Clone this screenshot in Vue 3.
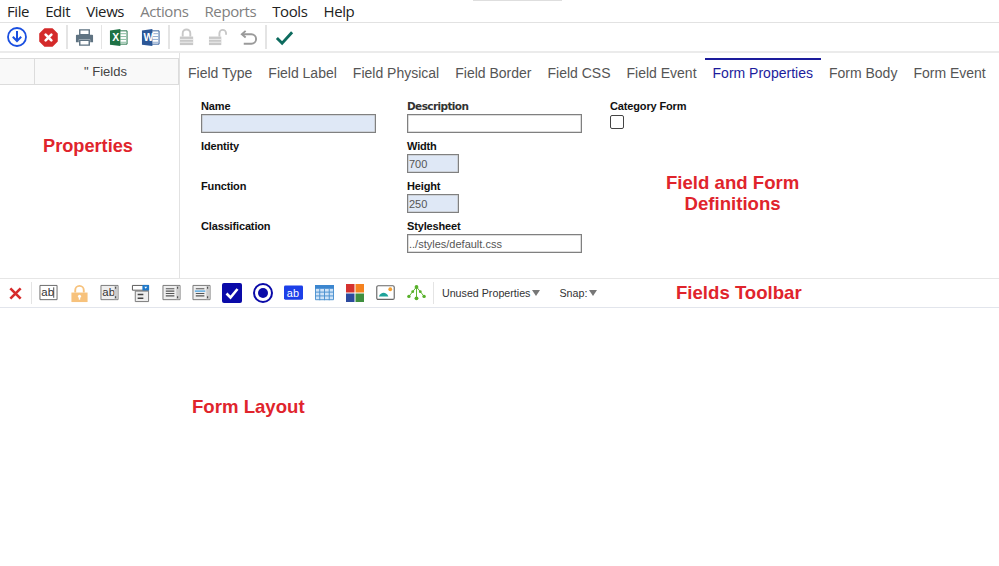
<script setup>
const menus = [
  { t: 'File' }, { t: 'Edit' }, { t: 'Views' }, { t: 'Actions', off: true },
  { t: 'Reports', off: true }, { t: 'Tools' }, { t: 'Help' }
]
const tabs = ['Field Type', 'Field Label', 'Field Physical', 'Field Border', 'Field CSS', 'Field Event', 'Form Properties', 'Form Body', 'Form Event']
</script>

<template>
  <div class="page">
    <i class="sliver"></i>
    <nav class="menu">
      <span v-for="m in menus" :key="m.t" :class="{ off: m.off }">{{ m.t }}</span>
    </nav>

    <div class="tools">
      <svg class="ic first" viewBox="0 0 20 20"><circle cx="10" cy="10" r="9" fill="none" stroke="#1a4fe0" stroke-width="1.800"/><path d="M10 4v10M5.800 9.800 10 14l4.200-4.200" fill="none" stroke="#1a4fe0" stroke-width="2"/></svg>
      <svg class="ic gap1" viewBox="0 0 20 20"><path d="M6 1h8l5 5v8l-5 5H6l-5-5V6z" fill="#d42a2a" stroke="#d42a2a" stroke-linejoin="round" stroke-width="1.500"/><path d="m7 7 6 6m0-6-6 6" stroke="#fff" stroke-width="2.800" stroke-linecap="round"/></svg>
      <i class="sep s1"></i>
      <svg class="ic" viewBox="0 0 20 20"><path d="M5 2h10v5H5z" fill="#fff" stroke="#5f7382" stroke-width="1.500"/><path d="M2 7h16a1 1 0 0 1 1 1v7h-3v-3H4v3H1V8a1 1 0 0 1 1-1z" fill="#5f7382"/><path d="M5 13h10v5H5z" fill="#fff" stroke="#5f7382" stroke-width="1.500"/></svg>
      <i class="sep s2"></i>
      <svg class="ic" viewBox="0 0 20 20"><path d="M11 3h8v14h-8z" fill="#fff" stroke="#1e7145"/><path d="M12 6h6M12 9h6M12 12h6M12 15h6" stroke="#7fb89a"/><path d="M1 2.500 12 1v18L1 17.500z" fill="#1e7145"/><text x="3.500" y="14" class="glyph">X</text></svg>
      <svg class="ic gap2" viewBox="0 0 20 20"><path d="M11 3h8v14h-8z" fill="#fff" stroke="#2b5797"/><path d="M12 6h6M12 9h6M12 12h6M12 15h6" stroke="#8aa6cf"/><path d="M1 2.500 12 1v18L1 17.500z" fill="#2b5797"/><text x="2.500" y="14" class="glyph">W</text></svg>
      <i class="sep s3"></i>
      <svg class="ic" viewBox="0 0 20 20"><path d="M6 9V5.500a4 4 0 0 1 8 0V9" fill="none" stroke="#c8c8c8" stroke-width="2"/><path d="M3 9h14v9H3z" fill="#c8c8c8"/><path d="M3 12h14M3 15h14" stroke="#eee"/></svg>
      <svg class="ic gap3" viewBox="0 0 20 20"><path d="M12 9V5.500a3.500 3.500 0 0 1 7 0V7" fill="none" stroke="#c8c8c8" stroke-width="2"/><path d="M1 9h13v9H1z" fill="#c8c8c8"/><path d="M1 12h13M1 15h13" stroke="#eee"/></svg>
      <svg class="ic gap3" viewBox="0 0 20 20"><path d="M7 3 3 6.500 7 10" fill="none" stroke="#9a9a9a" stroke-width="2"/><path d="M3.500 6.500H13a4.500 4.500 0 0 1 0 10H5" fill="none" stroke="#9a9a9a" stroke-width="2"/></svg>
      <i class="sep s4"></i>
      <svg class="ic" viewBox="0 0 20 20"><path d="M2 10.500 7.500 16 18 4.500" fill="none" stroke="#0d6b5e" stroke-width="3"/></svg>
    </div>

    <section class="main">
      <aside class="side">
        <div class="side-head">
          <div class="side-blank"></div>
          <div class="side-title">" Fields</div>
        </div>
      </aside>
      <div class="content">
        <div class="tabs">
          <span v-for="t in tabs" :key="t" class="tab" :class="{ on: t === 'Form Properties' }">{{ t }}</span>
        </div>
        <div class="form">
          <div class="col c1">
            <div class="fld"><label>Name</label><div class="inp blue wide"></div></div>
            <div class="fld"><label>Identity</label></div>
            <div class="fld"><label>Function</label></div>
            <div class="fld"><label>Classification</label></div>
          </div>
          <div class="col c2">
            <div class="fld"><label class="alt">Description</label><div class="inp wide"></div></div>
            <div class="fld"><label>Width</label><div class="inp blue short">700</div></div>
            <div class="fld"><label>Height</label><div class="inp blue short">250</div></div>
            <div class="fld"><label>Stylesheet</label><div class="inp wide">../styles/default.css</div></div>
          </div>
          <div class="col c3">
            <div class="fld"><label>Category Form</label><div class="check"></div></div>
          </div>
        </div>
      </div>
    </section>

    <div class="ftools">
      <svg class="x" viewBox="0 0 16 16"><path d="m2.500 2.500 11 11m0-11-11 11" stroke="#d62b2b" stroke-width="2.800"/></svg>
      <i class="sep f1"></i>
      <div class="slots">
        <svg class="fi" viewBox="0 0 20 18"><path d="M1 1.500h18v15H1z" fill="#fff" stroke="#666"/><text x="2.500" y="13" class="ab">ab</text><path d="M15.500 3.500v11" stroke="#444"/></svg>
        <svg class="fi" viewBox="0 0 20 20"><path d="M5.500 9V6.500a4.500 4.500 0 0 1 9 0V9" fill="none" stroke="#f7c27c" stroke-width="2"/><path d="M1.500 9h17v10h-17z" fill="#f7c27c"/><circle cx="10" cy="13" r="1.600" fill="#fff"/><path d="M10 13v3.500" stroke="#fff" stroke-width="1.500"/></svg>
        <svg class="fi" viewBox="0 0 20 18"><path d="M1 1.500h18v15H1z" fill="#eee" stroke="#777"/><text x="2.500" y="13" class="ab">ab</text><path d="M15 2h3.500v14H15z" fill="#ccc"/><path d="M16 4h1M16 14h1" stroke="#333" stroke-width="2"/></svg>
        <svg class="fi" viewBox="0 0 20 20"><path d="M1.500 1.500h17v5h-17z" fill="#fff" stroke="#555"/><path d="M12 1h7v6h-7z" fill="#1f78c8"/><path d="m14 3 1.500 2L17 3z" fill="#fff"/><path d="M4.500 7.500h14v11h-14z" fill="#eee" stroke="#777"/><path d="M7 11h6M7 15h6" stroke="#444" stroke-width="1.500"/></svg>
        <svg class="fi" viewBox="0 0 20 18"><path d="M1 1.500h18v15H1z" fill="#eee" stroke="#777"/><path d="M4 5h9M4 7.500h9M4 10h9M4 12.500h9" stroke="#555" stroke-width="1.200"/><path d="M15 2h3.500v14H15z" fill="#ccc"/><path d="M16 4h1M16 14h1" stroke="#333" stroke-width="2"/></svg>
        <svg class="fi" viewBox="0 0 20 18"><path d="M1 1.500h18v15H1z" fill="#eee" stroke="#777"/><path d="M4 5h9M4 10h9M4 12.500h9" stroke="#555" stroke-width="1.200"/><path d="M3 7.500h11" stroke="#58a8e0" stroke-width="1.500"/><path d="M15 2h3.500v14H15z" fill="#ccc"/><path d="M16 4h1M16 14h1" stroke="#333" stroke-width="2"/></svg>
        <svg class="fi big" viewBox="0 0 20 20"><rect width="20" height="20" rx="2" fill="#0a0aa8"/><path d="m4.500 10.500 4 4 7-8.500" fill="none" stroke="#fff" stroke-width="2.600"/></svg>
        <svg class="fi big" viewBox="0 0 20 20"><circle cx="10" cy="10" r="9" fill="#fff" stroke="#0a0aa8" stroke-width="2"/><circle cx="10" cy="10" r="5" fill="#0a0aa8"/></svg>
        <svg class="fi" viewBox="0 0 20 16"><rect y=".5" width="20" height="15" rx="1.500" fill="#1c3fe8"/><text x="3" y="12.500" class="abw">ab</text></svg>
        <svg class="fi" viewBox="0 0 20 16"><path d="M.5.500h19v15H.5z" fill="#cfe3f7" stroke="#4a90d0"/><path d="M0 0h20v4H0z" fill="#3b86cf"/><path d="M5 4v12M10 4v12M15 4v12M0 7.500h20M0 11.500h20" stroke="#4a90d0"/></svg>
        <svg class="fi sq" viewBox="0 0 18 18"><path d="M0 0h8.500v8.500H0z" fill="#d5322f"/><path d="M9.500 0H18v8.500H9.500z" fill="#f5821f"/><path d="M0 9.500h8.500V18H0z" fill="#2c4a9e"/><path d="M9.500 9.500H18V18H9.500z" fill="#3f8f3f"/></svg>
        <svg class="fi" viewBox="0 0 20 16"><rect x=".8" y=".8" width="18.400" height="14.400" rx="1.500" fill="#fff" stroke="#666" stroke-width="1.200"/><circle cx="15" cy="4.500" r="2" fill="#f5a030"/><path d="M3 12c2-5 8-5 10 0z" fill="#1fa39a"/></svg>
        <svg class="fi" viewBox="0 0 20 16"><path d="M10 2v12M10 2 6 7l-4 5M10 2l8 10" stroke="#58b02a"/><g fill="#58b02a"><circle cx="10" cy="2" r="2"/><circle cx="10" cy="14" r="2"/><circle cx="2" cy="12" r="1.800"/><circle cx="18" cy="12" r="1.800"/><circle cx="6" cy="7" r="1.500"/><circle cx="14" cy="7" r="1.500"/></g></svg>
      </div>
      <i class="sep f2"></i>
      <span class="drop unused">Unused Properties<b></b></span>
      <span class="drop snap">Snap:<b></b></span>
    </div>

    <div class="note n1">Properties</div>
    <div class="note n2">Field and Form<br>Definitions</div>
    <div class="note n3">Fields Toolbar</div>
    <div class="note n4">Form Layout</div>
  </div>
</template>

<style scoped>
.page { position: relative; width: 999px; height: 566px; background: #fff; overflow: hidden; font-family: "Liberation Sans", Arial, sans-serif; }
.sliver { position: absolute; left: 473px; top: 0; width: 89px; height: 1px; background: #dedede; }
.menu { height: 22px; display: flex; gap: 16px; padding-left: 7px; border-bottom: 1px solid #e2e2e2; font: 15px/22px "Open Sans", sans-serif; letter-spacing: -.4px; color: #222; }
.menu .off { color: #808080; }
.tools { height: 28px; display: flex; align-items: center; padding-left: 7px; border-bottom: 2px solid #ebebeb; }
.ic { width: 19px; height: 19px; flex: none; display: block; }
.ic.first { width: 20px; height: 20px; }
.gap1 { margin-left: 12px; }
.gap2 { margin-left: 13px; }
.gap3 { margin-left: 12px; }
.sep { display: block; width: 2px; flex: none; height: 24px; background: #e4e4e4; }
.s1 { margin: 0 7px 0 8px; }
.s2 { margin: 0 7px; width: 1px; }
.s3 { margin: 0 7px 0 8px; }
.s4 { margin: 0 8px 0 7px; }
.glyph { font: bold 11px "Liberation Sans", sans-serif; fill: #fff; }
.main { height: 225px; display: flex; }
.side { width: 179px; flex: none; border-right: 1px solid #e2e2e2; box-sizing: content-box; padding-top: 5px; }
.side-head { height: 25px; display: flex; border: 1px solid #dcdcdc; border-left: 0; background: #f9f9f9; }
.side-blank { width: 34px; border-right: 1px solid #dcdcdc; }
.side-title { flex: 1; text-align: center; font-size: 13px; line-height: 25px; color: #444; padding-right: 2px; }
.content { flex: 1; min-width: 0; }
.tabs { display: flex; gap: 16px; padding: 5px 0 0 8px; height: 29px; box-sizing: content-box; }
.tab { font-size: 14px; line-height: 25px; height: 29px; box-sizing: border-box; padding-top: 1px; color: #555; border-top: 2px solid transparent; white-space: nowrap; position: relative; }
.tab.on { color: #1c1c9c; border-top-color: #1c1c9c; margin: 0 -8px; padding-left: 8px; padding-right: 8px; }
.form { display: flex; padding-top: 12px; }
.col { flex: none; }
.c1 { width: 206px; margin-left: 21px; }
.c2 { width: 203px; }
.fld { height: 40px; }
label { display: block; height: 14px; font-weight: 700; font-size: 11px; line-height: 14px; letter-spacing: -.15px; color: #111; }
label.alt { font-family: "DejaVu Sans", sans-serif; font-size: 10.500px; letter-spacing: -.6px; color: #333; }
.inp { box-sizing: border-box; height: 19px; margin-top: 1px; border: 1px solid #808080; box-shadow: inset 0 0 0 .5px #bbb; font-size: 11px; line-height: 18px; padding-left: 1px; color: #555; background: #fff; }
.blue { background: #dfe8f6; }
.wide { width: 175px; }
.short { width: 52px; }
.check { box-sizing: border-box; width: 14px; height: 14px; border: 1px solid #444; border-radius: 2px; margin-top: 2px; }
.ftools { height: 28px; display: flex; align-items: center; padding-left: 8px; border-top: 1px solid #e6e6e6; border-bottom: 1px solid #e2e5ec; box-sizing: content-box; }
.x { width: 15px; height: 15px; flex: none; display: block; }
.slots { display: grid; grid-template-columns: repeat(13, 30.700px); justify-items: center; align-items: center; margin-left: 1px; }
.fi { width: 19px; height: auto; display: block; }
.fi.big { width: 20px; }
.fi.sq { width: 18px; }
.ab { font: 12px "Liberation Sans", sans-serif; fill: #333; }
.abw { font: 11.500px "Liberation Sans", sans-serif; fill: #fff; }
.f1 { margin-left: 8px; width: 1px; height: 22px; }
.f2 { margin: 0 8px 0 1px; width: 1px; height: 22px; }
.drop { font-size: 10.700px; color: #333; display: flex; align-items: center; gap: 2px; white-space: nowrap; }
.drop b { display: block; width: 0; height: 0; border: 4.500px solid transparent; border-top: 6px solid #777; border-bottom: 0; }
.snap { margin-left: 19px; }
.note { position: absolute; font-weight: 700; font-size: 18.600px; line-height: 21px; color: #e0242c; text-align: center; white-space: nowrap; }
.n1 { left: 43px; top: 136px; font-size: 18.200px; }
.n2 { left: 666px; top: 172px; }
.n3 { left: 676px; top: 282px; }
.n4 { left: 192px; top: 396px; }
</style>
